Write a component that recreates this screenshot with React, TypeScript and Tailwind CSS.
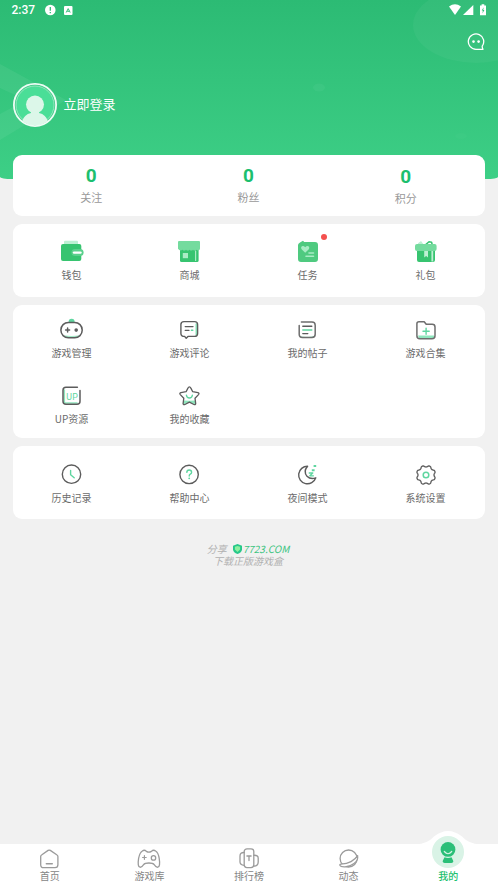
import type { ReactNode } from "react";

const DARK = "#5c5c5c";
const MINT = "#5fd6a0";
const GRAY = "#9b9b9b";

function Icon({ children, size = 24 }: { children: ReactNode; size?: number }) {
  return (
    <svg
      width={size}
      height={size}
      viewBox={`0 0 ${size} ${size}`}
      fill="none"
      strokeLinecap="round"
      strokeLinejoin="round"
      className="block overflow-visible"
    >
      {children}
    </svg>
  );
}

const wallet = (
  <Icon>
    <rect x="4" y="0.8" width="14" height="8" rx="1" fill="#bdf0d3" />
    <rect x="1" y="4" width="20.3" height="17" rx="2" fill="#37c470" />
    <rect x="11.4" y="9" width="12.2" height="7" rx="3.5" fill="#5bd08c" />
    <path d="M14 12.6h6.5" stroke="#fff" strokeWidth="2.4" />
  </Icon>
);

const shop = (
  <Icon>
    <rect x="2" y="8" width="18.6" height="14" rx="1.5" fill="#37c470" />
    <path d="M1 1h20q1 0 1 1v6.6q0 1.6-1.6 1.8-1.4.2-2-.7-1.6 1.8-3.4 0-1.7 1.8-3.5 0-1.7 1.8-3.5 0-1.7 1.8-3.5 0-2.5 1.8-4.5-1V2q0-1 1-1z" fill="#74db9e" />
    <rect x="4.8" y="13" width="5.2" height="5.2" fill="#a9ecc5" />
    <path d="M17.6 11v9.5" stroke="#a9ecc5" strokeWidth="1.2" />
  </Icon>
);

const task = (
  <Icon>
    <path d="M4 2.4l3-1.6 1.2 1.2H19q3 0 3 3V19q0 3-3 3H5q-3 0-3-3V5q0-1.6 2-2.6z" fill="#4fca80" />
    <path d="M9.2 12.8L5.6 9.2C4 7.2 6.6 4.4 9.2 7.2c2.6-2.8 5.2 0 3.6 2z" fill="#a9ecc5" />
    <path d="M13 13h4.5M10 16.3h7.5" stroke="#a9ecc5" strokeWidth="1.6" />
  </Icon>
);

const gift = (
  <Icon>
    <path d="M4 6V3.3l3-2.2 3.6 4.6" fill="#bdf0d3" />
    <path d="M12 4.4l3-2.6 2.6.4.6 2.4" stroke="#37c470" strokeWidth="1.5" />
    <rect x="3" y="9" width="18" height="13" rx="2" fill="#37c470" />
    <rect x="1" y="4" width="21.6" height="7" rx="2" fill="#74db9e" />
    <path d="M10.200 11h3.800v6.400l-1.900-1.500-1.900 1.500z" fill="#bdf0d3" />
    <path d="M18.300 11v10.500" stroke="#bdf0d3" strokeWidth="1.800" strokeLinecap="butt" />
  </Icon>
);

const manage = (
  <Icon>
    <path d="M8.600 4q0-3.200 3-3.200t3 3.200z" fill={MINT} />
    <path d="M4 17.200q7.600 1.400 15.400 0l-2.600 2.600H6.800z" fill="#a4ebc8" />
    <rect x="0.900" y="4.400" width="21.300" height="15.400" rx="7.500" stroke={DARK} strokeWidth="1.500" />
    <path d="M5.600 12.100h4M7.600 10.100v4" stroke={DARK} strokeWidth="1.500" />
    <circle cx="16.200" cy="12.100" r="1.800" fill={DARK} />
  </Icon>
);

const comment = (
  <Icon>
    <path d="M18.300 6v11" stroke="#8fe6bd" strokeWidth="1.600" />
    <path d="M6 3.600h10.600q3 0 3 3v8.800q0 3-3 3H10l-1.800 1.800-1.600-1.800Q2.900 18.400 2.900 15.400V6.600q0-3 3.100-3z" stroke={DARK} strokeWidth="1.400" />
    <path d="M7.200 8.600h7.800M7.200 12.300h3.800" stroke={DARK} strokeWidth="1.300" />
    <path d="M13.400 12.300h1.400" stroke={MINT} strokeWidth="1.400" />
  </Icon>
);

const posts = (
  <Icon>
    <path d="M5 19q9 1.200 13.600-.6" stroke="#8fe6bd" strokeWidth="1" />
    <path d="M5.400 4H16q3.200 0 3.200 3.200v9q0 3.200-3.200 3.200H6.400q-3.200 0-3.200-3.200V7.400" stroke="#6e6e6e" strokeWidth="1.500" />
    <path d="M6.800 8.200h9M6.800 15.600h5" stroke={DARK} strokeWidth="1.400" />
    <path d="M6.800 12h9" stroke={MINT} strokeWidth="1.400" />
  </Icon>
);

const folder = (
  <Icon>
    <path d="M4 17.600h16v2.600H5z" fill="#8fe6bd" />
    <path d="M5 3.700h5.200l2 2.600h6q2.800 0 2.800 2.600v8.800q0 3-3 3H5.800q-2.900 0-2.900-3V5.800q0-2.100 2.100-2.100z" stroke="#6e6e6e" strokeWidth="1.500" />
    <path d="M9 13.200h6.200M12.100 10.100v6.200" stroke={MINT} strokeWidth="1.400" />
  </Icon>
);

const upload = (
  <Icon>
    <path d="M4.300 6v13H17" stroke="#8fe6bd" strokeWidth="1.600" />
    <path d="M17.400 3.200H6q-3 0-3 3v11q0 3 3 3h11q3 0 3-3V6.400" stroke={DARK} strokeWidth="1.500" />
    <text x="12.200" y="15.600" textAnchor="middle" fontSize="8.800" letterSpacing="0.200" fill={MINT} fontFamily="Roboto, sans-serif">
      UP
    </text>
  </Icon>
);

const favorite = (
  <Icon>
    <path d="M5.400 16.600l6 .2 6-.2.5 4.200-6.500-2.800L5 20.800z" fill="#8fe6bd" />
    <path d="M9.800 4.400q1.600-3 3.200 0l1.700 3.300 5.200.9q1.800.7.600 2l-3.500 3.600.7 5.400q-.3 1.600-1.800.9l-4.500-2.300-4.500 2.300q-1.500.7-1.800-.9l.7-5.400-3.500-3.600q-1.200-1.300.6-2l5.200-.9z" stroke={DARK} strokeWidth="1.300" />
    <path d="M8.400 11.200q.4 2.800 3 2.800t3-2.800" stroke={MINT} strokeWidth="1.300" />
  </Icon>
);

const history = (
  <Icon>
    <circle cx="11.500" cy="11.200" r="9.200" stroke={DARK} strokeWidth="1.400" />
    <path d="M10.600 7.400v4.400l3.600 3" stroke={MINT} strokeWidth="1.400" />
  </Icon>
);

const help = (
  <Icon>
    <circle cx="11.100" cy="11.400" r="9.200" stroke={DARK} strokeWidth="1.400" />
    <path d="M8.800 9.400q.1-2.400 2.400-2.400t2.400 2.200q0 1.200-1.300 1.900-1.100.6-1.100 1.900" stroke={MINT} strokeWidth="1.400" />
    <circle cx="11.200" cy="15.300" r="0.900" fill={MINT} />
  </Icon>
);

const night = (
  <Icon>
    <path d="M11.600 3.200A8.800 8.800 0 1 0 19.800 14.800Q14.600 16.800 11 13.200 7 8.400 11.600 3.200z" stroke={DARK} strokeWidth="1.400" />
    <path d="M13.200 10h3.600l-3 2.800h3.600" stroke={MINT} strokeWidth="1.300" />
    <path d="M16.800 7.300h.8M18.600 3h.6" stroke={MINT} strokeWidth="2" strokeLinecap="square" />
  </Icon>
);

// outline of the gear: a circle with eight rounded teeth
const gear = Array.from({ length: 96 }, (_, i) => {
  const a = (i / 96) * Math.PI * 2;
  const wave = Math.cos(8 * a - Math.PI);
  const r = 8.8 + Math.sign(wave) * Math.pow(Math.abs(wave), 0.6) * 0.8;
  return `${(12 + r * Math.cos(a)).toFixed(2)},${(12 + r * Math.sin(a)).toFixed(2)}`;
}).join(" ");

const settings = (
  <Icon>
    <polygon points={gear} stroke={DARK} strokeWidth="1.300" />
    <circle cx="12" cy="12" r="2.800" stroke={MINT} strokeWidth="1.500" />
  </Icon>
);

type Entry = { label: string; icon: ReactNode; dot?: boolean };

const services: Entry[] = [
  { label: "钱包", icon: wallet },
  { label: "商城", icon: shop },
  { label: "任务", icon: task, dot: true },
  { label: "礼包", icon: gift },
];

const games: Entry[] = [
  { label: "游戏管理", icon: manage },
  { label: "游戏评论", icon: comment },
  { label: "我的帖子", icon: posts },
  { label: "游戏合集", icon: folder },
  { label: "UP资源", icon: upload },
  { label: "我的收藏", icon: favorite },
];

const tools: Entry[] = [
  { label: "历史记录", icon: history },
  { label: "帮助中心", icon: help },
  { label: "夜间模式", icon: night },
  { label: "系统设置", icon: settings },
];

const stats = ["关注", "粉丝", "积分"];

const tabs: Entry[] = [
  {
    label: "首页",
    icon: (
      <Icon size={22}>
        <path d="M1.700 8.600Q1.700 7.400 2.900 6.700L9.100 2.400q1.100-.7 2.200 0l6.400 4.300q1.200.7 1.200 1.900v8.200q0 2.900-2.900 2.900H4.600q-2.900 0-2.900-2.900z" stroke={GRAY} strokeWidth="1.300" />
        <path d="M7.300 15.700h6" stroke={GRAY} strokeWidth="1.400" />
      </Icon>
    ),
  },
  {
    label: "游戏库",
    icon: (
      <Icon size={22}>
        <path d="M4.400 3Q6.400 1.400 8.400 3.400q2.400 1.600 5 0 2-2 4.200-.4 2.600 1.400 3.600 7.400 1.300 8.400-1.400 8.800-1.600.4-3.600-2.600-1.200-1.600-5.300-1.600T5.600 16.600q-2 3-3.600 2.600-2.700-.4-1.400-8.800Q1.800 4.400 4.400 3z" stroke={GRAY} strokeWidth="1.300" />
        <path d="M4.600 9.500h3.600M6.400 7.700v3.600" stroke={GRAY} strokeWidth="1.200" />
        <circle cx="15.500" cy="9.900" r="2.200" stroke={GRAY} strokeWidth="1.300" />
      </Icon>
    ),
  },
  {
    label: "排行榜",
    icon: (
      <Icon size={22}>
        <path d="M6.200 4.500q-4.200-.2-4.200 3.500v6q0 3 4.200 3.300M15.800 7.300q4.400-.3 4.400 2.700v4q0 4-4.400 4.200" stroke={GRAY} strokeWidth="1.300" />
        <rect x="6.200" y="0.800" width="9.600" height="18.800" rx="2.800" stroke={GRAY} strokeWidth="1.300" />
        <path d="M8.900 8h4.200M11 8v4.500" stroke={GRAY} strokeWidth="1.300" />
      </Icon>
    ),
  },
  {
    label: "动态",
    icon: (
      <Icon size={22}>
        <circle cx="10.600" cy="10.500" r="8.500" stroke={GRAY} strokeWidth="1.300" />
        <path d="M19.600 7.600q.8 4.600-3.600 8-4.600 3.600-9.800 3.300-3.600-.2-4.300-1.700-.2-.9.900-1 6.200-.4 10.200-2.600 4.600-2.600 6.600-6z" fill="#fff" stroke={GRAY} strokeWidth="1.300" />
      </Icon>
    ),
  },
];

function MenuItem({ label, icon, dot }: Entry) {
  return (
    <div className="flex flex-col items-center">
      <div className="relative">
        {icon}
        {dot && <span className="absolute -top-1.5 left-[25px] size-1.5 rounded-full bg-[#f4504e]" />}
      </div>
      <span className="mt-[3px] pr-px text-[10px] leading-4 text-[#6b6b6b]">{label}</span>
    </div>
  );
}

function MenuCard({ items, className }: { items: Entry[]; className: string }) {
  return (
    <section className={`grid grid-cols-4 content-start rounded-[9px] bg-white ${className}`}>
      {items.map((item) => (
        <MenuItem key={item.label} {...item} />
      ))}
    </section>
  );
}

function StatusBar() {
  return (
    <div className="flex h-5 items-center justify-between pr-[11px] pl-[11.5px] text-white">
      <div className="flex items-center">
        <span className="w-[33.5px] font-[Roboto] text-[12px] leading-5 font-medium">2:37</span>
        <svg width="11" height="12" viewBox="0 0 11 12">
          <circle cx="5.300" cy="6" r="5.300" fill="#fff" />
          <path d="M5.300 3v3.700M5.300 8v1.200" stroke="#2fbf77" strokeWidth="1.300" />
        </svg>
        <svg width="9" height="9" viewBox="0 0 9 9" className="ml-2">
          <rect width="8.500" height="9" rx="1" fill="#fff" />
          <path d="M2.200 6.500L4.200 2.600l2 3.900M3.200 5.300h2" stroke="#2fbf77" strokeWidth="1" fill="none" />
        </svg>
      </div>
      <svg width="38" height="12" viewBox="0 0 38 12" fill="#fff">
        <path d="M0 2.600q6-4.600 12 0L6 11z" />
        <path d="M24.300 1v10H14z" />
        <path d="M31 1.600h1.600V0.200h2.700V1.600H37v9.600h-6z" />
        <path d="M34.700 3.200l-2 3.400h1.200l-.5 3 2-3.600h-1.200z" fill="#2fbf77" />
      </svg>
    </div>
  );
}

function Header() {
  return (
    <header className="relative h-[179px] overflow-hidden rounded-b-[12px_2px] bg-linear-to-b from-[#2cbb74] to-[#3dcf86]">
      <svg width="498" height="179" className="absolute inset-0">
        <ellipse cx="476" cy="25" rx="63" ry="38" fill="#fff" fillOpacity="0.040" />
        <ellipse cx="319" cy="87.500" rx="6" ry="4" fill="#fff" fillOpacity="0.040" />
        <ellipse cx="461" cy="136" rx="6" ry="3" fill="#fff" fillOpacity="0.020" />
        <path d="M0 64L66 100 0 140V114L26 100 0 88z" fill="#fff" fillOpacity="0.060" />
      </svg>
      <div className="relative">
        <StatusBar />
        <div className="flex justify-end pt-3 pr-[13px]">
          <svg width="18" height="20" viewBox="0 0 18 20" fill="none" stroke="#fff" strokeWidth="1.300">
            <path d="M15.200 14.200A7.700 7.700 0 1 0 9 17.300H16q-.9-1.400-.8-3.100z" strokeLinejoin="round" />
            <circle cx="6.500" cy="9.600" r="1.300" fill="#fff" stroke="none" />
            <circle cx="11.600" cy="9.600" r="1.300" fill="#fff" stroke="none" />
          </svg>
        </div>
        <div className="mt-[31px] flex items-center gap-[6.5px] pl-[13px]">
          <svg width="44" height="44" viewBox="0 0 44 44">
            <clipPath id="face">
              <circle cx="22" cy="22" r="20.500" />
            </clipPath>
            <circle cx="22" cy="22" r="21.100" fill="#3fcb86" />
            <circle cx="22" cy="22" r="19" fill="#4ade97" stroke="#a5ebc8" strokeWidth="0.800" />
            <g clipPath="url(#face)" fill="#dcf7e9">
              <circle cx="22" cy="21.500" r="9" />
              <path d="M18 28h8v2q7 1.500 9 8.500L30 44H14l-5-5.500Q11 31.500 18 30z" />
            </g>
            <circle cx="22" cy="22" r="21.100" stroke="#eefcf5" strokeWidth="1.800" fill="none" />
          </svg>
          <span className="-mt-0.5 text-[13px] text-white">立即登录</span>
        </div>
      </div>
    </header>
  );
}

function TabBar() {
  return (
    <nav className="relative grid h-[41px] grid-cols-5 bg-white">
      <svg width="64" height="14" viewBox="0 0 64 14" className="absolute -top-[13px] left-[416px]">
        <path d="M0 13.500Q11 13 18 5.500 25 0 32 0t14 5.500Q53 13 64 13.500V14H0z" fill="#fff" />
      </svg>
      {tabs.map((tab) => (
        <div key={tab.label} className="flex flex-col items-center pt-1">
          {tab.icon}
          <span className="-mt-px text-[10px] leading-[13px] text-[#858585]">{tab.label}</span>
        </div>
      ))}
      <div className="relative -mt-2 flex flex-col items-center">
        <svg width="32" height="32" viewBox="0 0 32 32" className="block">
          <circle cx="16" cy="16" r="16" fill="#d9f3e6" />
          <circle cx="16" cy="13.400" r="7.400" fill="#2bbf78" />
          <path d="M12.300 15.500q3.700 4.500 7.400 0" stroke="#d9f3e6" strokeWidth="1.200" fill="none" strokeLinecap="round" />
          <path d="M12.500 21.300q3.500 1.200 7 0 1 2 1.900 4-.2 1.700-2 1.700h-6.800q-1.800 0-2-1.700.9-2 1.900-4z" fill="#2bbf78" />
        </svg>
        <span className="mt-px text-[10px] leading-[13px] font-medium text-[#1fbf70]">我的</span>
      </div>
    </nav>
  );
}

export default function App() {
  return (
    <div className="flex h-[885px] w-[498px] flex-col overflow-hidden bg-[#f1f1f1] font-['Noto_Sans_CJK_SC',sans-serif]">
      <Header />
      <main className="relative -mt-6 flex flex-1 flex-col px-[13px]">
        <section className="grid h-[61px] grid-cols-3 rounded-[9px] bg-white pt-[9px]">
          {stats.map((label) => (
            <div key={label} className="flex flex-col items-center pr-px last:pt-px">
              <span className="font-[Roboto] text-[19px] leading-6 font-bold text-[#1cbf6e]">0</span>
              <span className="-mt-px text-[11px] leading-5 text-[#999]">{label}</span>
            </div>
          ))}
        </section>
        <MenuCard items={services} className="mt-2 h-[73px] pt-4" />
        <MenuCard items={games} className="mt-2 h-[133px] gap-y-[23px] pt-[13px]" />
        <MenuCard items={tools} className="mt-2 h-[73px] pt-[17px]" />
        <footer className="mt-6 pr-0.5 text-center text-[10px] leading-3 text-[#b0b0b0] italic">
          <div className="flex items-center justify-center">
            <span>分享</span>
            <svg width="9" height="10" viewBox="0 0 9 10" className="mr-px ml-1.5">
              <path d="M4.500 0L9 1.800v3.700Q8.600 8.600 4.500 10 .4 8.600 0 5.500V1.800z" fill="#27c88a" />
              <path d="M4.500 2l2.600.8v2.700L4.500 8 1.900 5.500V2.800z" fill="#8df0a0" />
            </svg>
            <span className="text-[#3cc47f]">7723.COM</span>
          </div>
          <div>下载正版游戏盒</div>
        </footer>
      </main>
      <TabBar />
    </div>
  );
}
